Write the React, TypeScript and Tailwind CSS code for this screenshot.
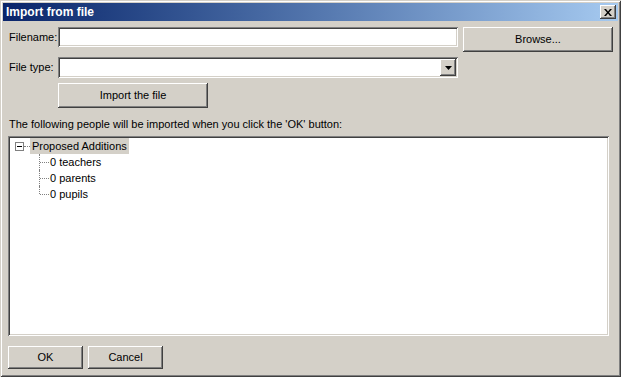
import React from "react";

const raised =
  "shadow-[inset_-1px_-1px_#404040,inset_1px_1px_#ffffff,inset_-2px_-2px_#808080,inset_2px_2px_#d4d0c8]";
const sunken =
  "shadow-[inset_1px_1px_#808080,inset_-1px_-1px_#ffffff,inset_2px_2px_#404040,inset_-2px_-2px_#d4d0c8]";

function Btn({ label, className }: { label: string; className: string }) {
  return (
    <div
      className={`flex items-center justify-center bg-[#d4d0c8] text-black ${raised} ${className}`}
    >
      {label}
    </div>
  );
}

function Child({ label, last }: { label: string; last?: boolean }) {
  return (
    <div className="flex h-[16px] items-center pl-[29px]">
      <div className="relative h-[16px] w-[11px]">
        <div
          className={`absolute left-0 top-0 w-0 border-l border-dotted border-[#808080] ${
            last ? "h-[8px]" : "h-[16px]"
          }`}
        />
        <div className="absolute left-[1px] top-[8px] h-0 w-[9px] border-t border-dotted border-[#808080]" />
      </div>
      <span className="pl-[0px]">{label}</span>
    </div>
  );
}

export default function App() {
  return (
    <div
      className="relative flex h-[377px] w-[621px] flex-col bg-[#d4d0c8] p-[3px] text-[11px] leading-[13px] text-black shadow-[inset_1px_1px_#d4d0c8,inset_-1px_-1px_#404040,inset_2px_2px_#ffffff,inset_-2px_-2px_#808080]"
      style={{ fontFamily: '"Liberation Sans", Arial, sans-serif' }}
    >
      {/* Title bar */}
      <div className="flex h-[18px] items-center justify-between bg-gradient-to-r from-[#0a246a] to-[#a6caf0] pl-[3px] pr-[2px]">
        <span className="text-[12px] font-bold leading-[14px] text-white">
          Import from file
        </span>
        <div
          className={`flex h-[14px] w-[16px] items-center justify-center bg-[#d4d0c8] ${raised}`}
        >
          <svg width="8" height="7" viewBox="0 0 8 7">
            <path
              d="M0 0h2l2 2.5L6 0h2L5 3.5 8 7H6L4 4.5 2 7H0l3-3.5z"
              fill="#000"
            />
          </svg>
        </div>
      </div>

      {/* Body */}
      <div className="flex flex-1 flex-col pl-[5px] pr-[4px]">
        {/* Filename row */}
        <div className="mt-[6px] flex h-[25px] items-start">
          <div className="flex h-[20px] w-[50px] items-center pl-[1px]">
            Filename:
          </div>
          <div className={`h-[20px] w-[400px] bg-white ${sunken}`} />
          <Btn label="Browse..." className="ml-[5px] h-[25px] w-[150px]" />
        </div>

        {/* File type row */}
        <div className="mt-[5px] flex h-[21px] items-center">
          <div className="flex h-[21px] w-[50px] items-center pl-[1px]">
            File type:
          </div>
          <div
            className={`flex h-[21px] w-[400px] items-center justify-end bg-white py-[2px] pr-[2px] ${sunken}`}
          >
            <div
              className={`flex h-[17px] w-[16px] items-center justify-center bg-[#d4d0c8] ${raised}`}
            >
              <svg width="7" height="4" viewBox="0 0 7 4">
                <path d="M0 0h7L3.5 4z" fill="#000" />
              </svg>
            </div>
          </div>
        </div>

        {/* Import button */}
        <div className="mt-[5px] flex pl-[50px]">
          <Btn label="Import the file" className="h-[25px] w-[150px]" />
        </div>

        {/* Info text */}
        <div className="mt-[9px] flex h-[14px] items-center pl-[1px]">
          The following people will be imported when you click the 'OK' button:
        </div>

        {/* Tree box */}
        <div
          className={`mt-[5px] h-[200px] w-[601px] bg-white p-[2px] ${sunken}`}
        >
          <div className="flex h-[16px] items-center pl-[5px]">
            <div className="flex h-[9px] w-[9px] items-center justify-center border border-[#808080] bg-white">
              <div className="h-[1px] w-[5px] bg-black" />
            </div>
            <div className="h-0 w-[6px] border-t border-dotted border-[#808080]" />
            <span className="flex h-[16px] items-center bg-[#d4d0c8] px-[2px]">
              Proposed Additions
            </span>
          </div>
          <Child label="0 teachers" />
          <Child label="0 parents" />
          <Child label="0 pupils" last />
        </div>

        {/* Bottom buttons */}
        <div className="mt-[10px] flex gap-[5px]">
          <Btn label="OK" className="h-[23px] w-[75px]" />
          <Btn label="Cancel" className="h-[23px] w-[75px]" />
        </div>
      </div>
    </div>
  );
}
